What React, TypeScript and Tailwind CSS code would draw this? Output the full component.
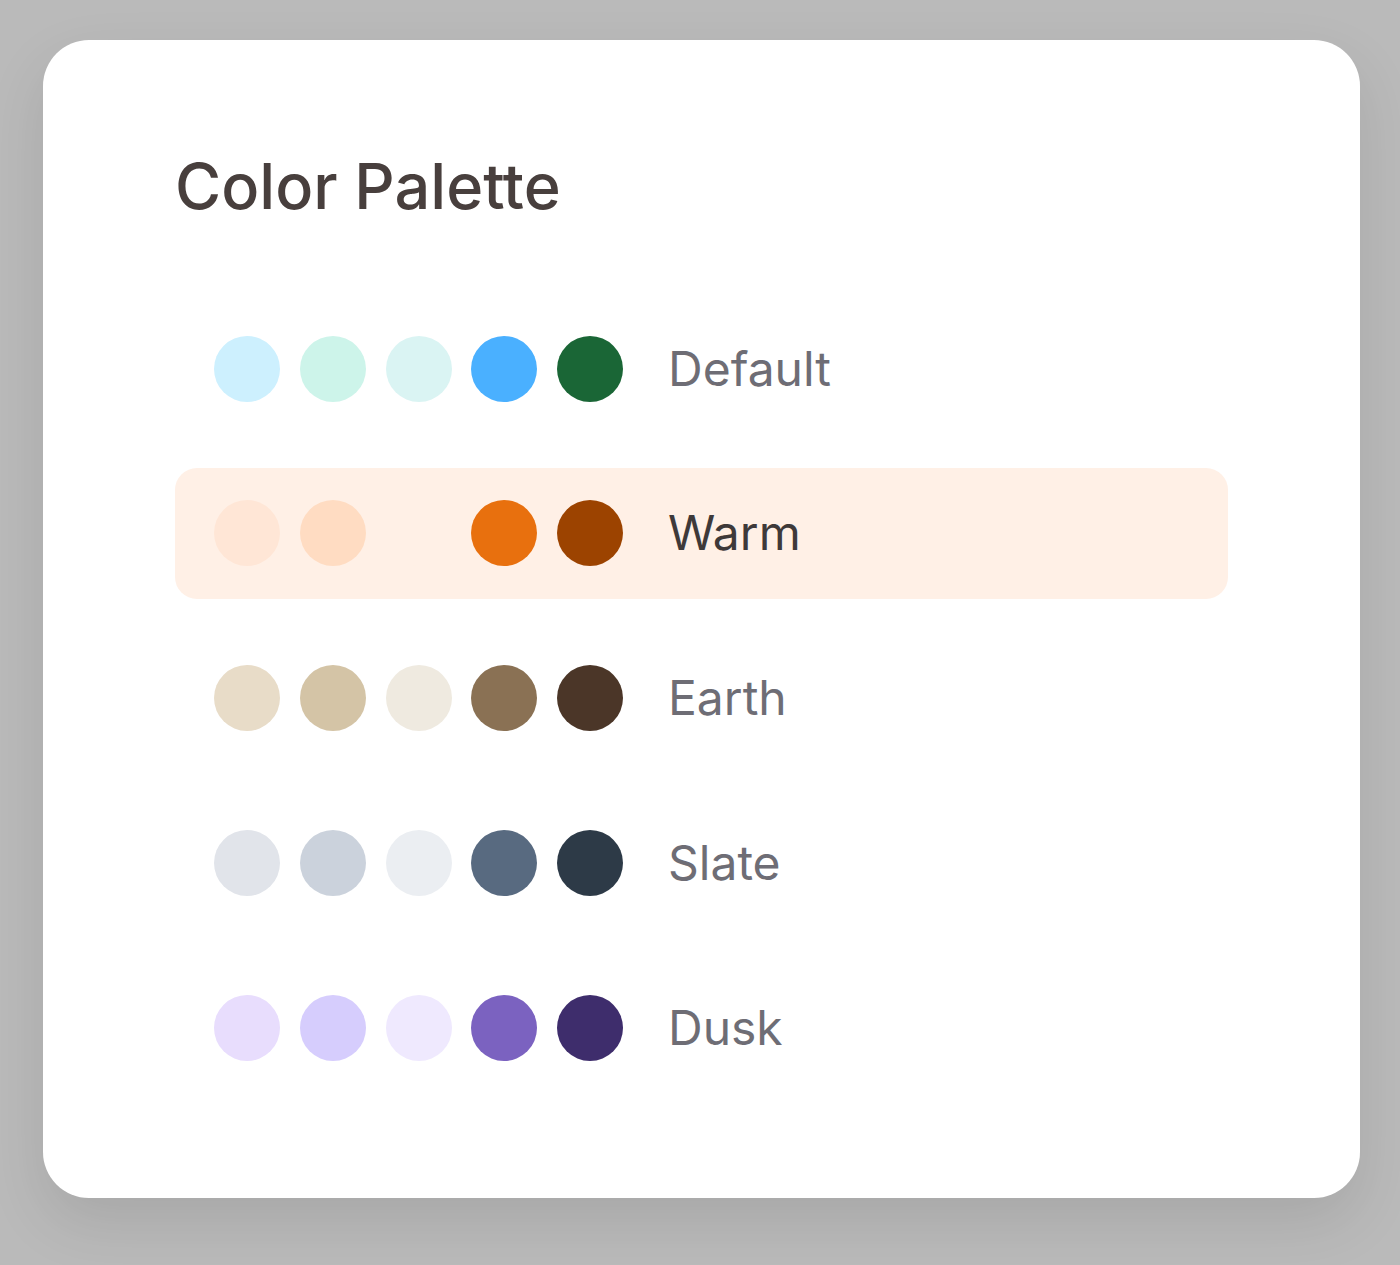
import React from "react";

const palettes: { name: string; colors: string[]; active?: boolean }[] = [
  { name: "Default", colors: ["#cdf0fe", "#cdf4ea", "#daf4f3", "#4ab0ff", "#1a6636"] },
  { name: "Warm", colors: ["#ffe6d6", "#ffdcc2", "#fff0e6", "#e8700e", "#9c4300"], active: true },
  { name: "Earth", colors: ["#e8dcc8", "#d4c4a6", "#efeae0", "#8a7154", "#4b3628"] },
  { name: "Slate", colors: ["#e1e4ea", "#cbd2dc", "#ebeef2", "#586a80", "#2d3a47"] },
  { name: "Dusk", colors: ["#e8ddfd", "#d6cdfd", "#efe9fe", "#7b62c0", "#3e2d6c"] },
];

export default function App() {
  return (
    <div
      className="h-[1265px] w-[1400px] bg-[#bababa] pt-[40px] pl-[43px]"
      style={{ fontFamily: "Inter, 'Noto Sans', sans-serif" }}
    >
      <div className="h-[1158px] w-[1317px] rounded-[46px] bg-white pl-[132px] pr-[132px] pt-[115px] shadow-[0_24px_60px_rgba(0,0,0,0.10)]">
        <h1 className="text-[63px] font-medium leading-none text-[#483f3d]">Color Palette</h1>
        <div className="mt-[85px] flex flex-col gap-[33.75px]">
          {palettes.map((p) => (
            <div
              key={p.name}
              className={`flex h-[131px] items-center rounded-[22px] pl-[39px] ${p.active ? "bg-[#fff0e6]" : ""}`}
            >
              <div className="flex gap-[19.75px]">
                {p.colors.map((c, i) => (
                  <div key={i} className="h-[66px] w-[66px] rounded-full" style={{ backgroundColor: c }} />
                ))}
              </div>
              <span
                className={`ml-[45px] text-[48px] leading-none ${p.active ? "text-[#3e3939]" : "text-[#6e6d75]"}`}
              >
                {p.name}
              </span>
            </div>
          ))}
        </div>
      </div>
    </div>
  );
}
